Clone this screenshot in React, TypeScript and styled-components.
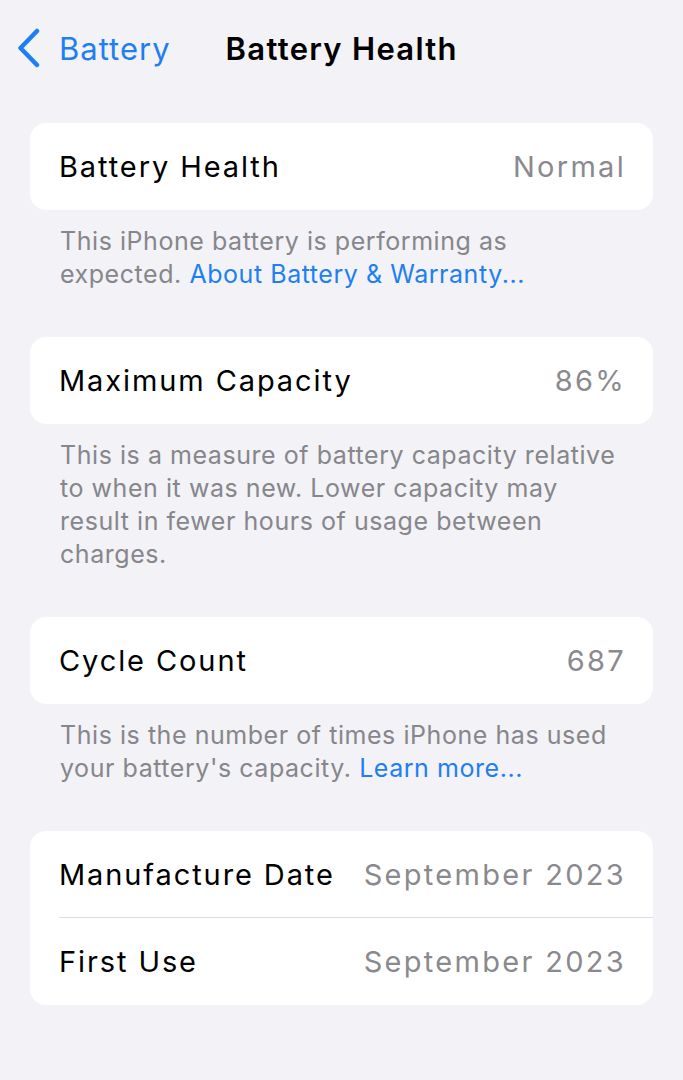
import styled, { createGlobalStyle } from 'styled-components';

const GlobalStyle = createGlobalStyle`
  html, body {
    margin: 0;
    padding: 0;
    background: #f2f2f7;
  }
  body {
    font-family: Inter, 'Noto Sans', 'Liberation Sans', sans-serif;
    -webkit-font-smoothing: antialiased;
  }
`;

const Screen = styled.div`
  width: 683px;
  min-height: 1080px;
  background: #f2f2f7;
`;

const NavBar = styled.div`
  height: 100px;
  display: flex;
  align-items: center;
  padding-left: 16px;
  box-sizing: border-box;
  position: relative;
  top: -2px;
`;

const BackButton = styled.div`
  display: flex;
  align-items: center;
  gap: 17px;
  color: #1f7ff0;
  font-size: 31px;
  letter-spacing: 1px;
  svg {
    display: block;
  }
`;

const NavTitle = styled.div`
  margin-left: 55px;
  font-size: 31px;
  font-weight: 600;
  color: #000;
  letter-spacing: 1.3px;
`;

const Content = styled.div`
  padding: 23px 30px 0 30px;
  display: flex;
  flex-direction: column;
  gap: 46px;
`;

const Section = styled.section`
  display: flex;
  flex-direction: column;
`;

const Card = styled.div`
  background: #fff;
  border-radius: 16px;
  overflow: hidden;
`;

const Row = styled.div<{ divider?: boolean }>`
  height: 87px;
  display: flex;
  align-items: center;
  justify-content: space-between;
  padding: 0 27px 0 29px;
  position: relative;
  font-size: 29px;
  ${(p) =>
    p.divider &&
    `
    &::after {
      content: '';
      position: absolute;
      left: 29px;
      right: 0;
      bottom: 0;
      height: 1px;
      background: #dcdce0;
    }
  `}
`;

const Label = styled.span`
  color: #000;
  letter-spacing: 1.9px;
`;

const Value = styled.span`
  color: #8a8a8e;
  letter-spacing: 2.3px;
`;

const Footer = styled.p`
  margin: 0;
  padding: 15px 30px 0 30px;
  font-size: 25px;
  line-height: 33px;
  color: #86868b;
  letter-spacing: 0.55px;
`;

const Link = styled.span`
  color: #1f7ff0;
`;

const Chevron = () => (
  <svg width="26" height="40" viewBox="0 0 26 40">
    <path
      d="M21 3 L4.5 20 L21 37"
      fill="none"
      stroke="#1f7ff0"
      strokeWidth="4.5"
      strokeLinecap="round"
      strokeLinejoin="round"
    />
  </svg>
);

export default function App() {
  return (
    <Screen>
      <GlobalStyle />
      <NavBar>
        <BackButton>
          <Chevron />
          <span>Battery</span>
        </BackButton>
        <NavTitle>Battery Health</NavTitle>
      </NavBar>
      <Content>
        <Section>
          <Card>
            <Row>
              <Label>Battery Health</Label>
              <Value>Normal</Value>
            </Row>
          </Card>
          <Footer>
            This iPhone battery is performing as
            <br />
            expected. <Link>About Battery &amp; Warranty...</Link>
          </Footer>
        </Section>
        <Section>
          <Card>
            <Row>
              <Label>Maximum Capacity</Label>
              <Value>86%</Value>
            </Row>
          </Card>
          <Footer>
            This is a measure of battery capacity relative
            <br />
            to when it was new. Lower capacity may
            <br />
            result in fewer hours of usage between
            <br />
            charges.
          </Footer>
        </Section>
        <Section>
          <Card>
            <Row>
              <Label>Cycle Count</Label>
              <Value>687</Value>
            </Row>
          </Card>
          <Footer>
            This is the number of times iPhone has used
            <br />
            your battery's capacity. <Link>Learn more...</Link>
          </Footer>
        </Section>
        <Section>
          <Card>
            <Row divider>
              <Label>Manufacture Date</Label>
              <Value>September 2023</Value>
            </Row>
            <Row>
              <Label>First Use</Label>
              <Value>September 2023</Value>
            </Row>
          </Card>
        </Section>
      </Content>
    </Screen>
  );
}
